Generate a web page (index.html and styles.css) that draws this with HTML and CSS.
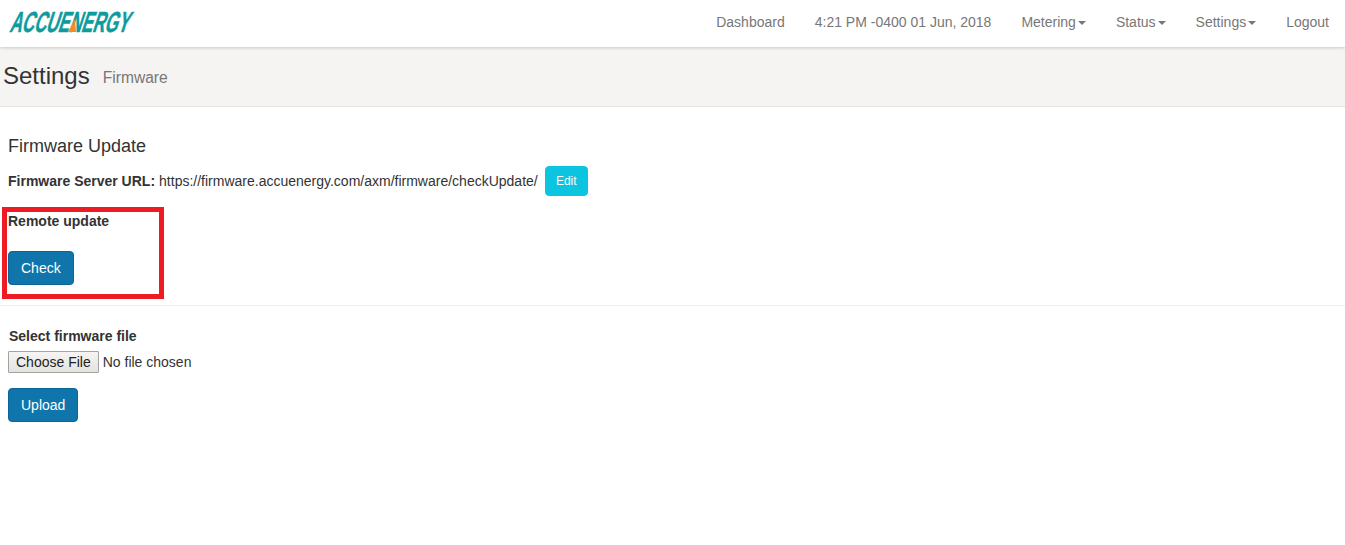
FILE: index.html
```html
<!DOCTYPE html>
<html lang="en">
<head>
<meta charset="utf-8">
<title>Settings - Firmware</title>
<link rel="stylesheet" href="styles.css">
</head>
<body>
<nav class="navbar">
  <a class="brand" href="#">
    <svg class="logo" width="132" height="26" viewBox="0 0 132 26">
      <text class="logo-text" x="0" y="0" textLength="119" lengthAdjust="spacingAndGlyphs" transform="translate(1 22) skewX(-18)">ACCUENERGY</text>
      <polygon class="logo-accent" points="60,22 67,9 68,22"/>
    </svg>
  </a>
  <ul class="nav">
    <li><a href="#">Dashboard</a></li>
    <li><a href="#">4:21 PM -0400 01 Jun, 2018</a></li>
    <li><a href="#">Metering<span class="caret"></span></a></li>
    <li><a href="#">Status<span class="caret"></span></a></li>
    <li><a href="#">Settings<span class="caret"></span></a></li>
    <li><a href="#">Logout</a></li>
  </ul>
</nav>
<header class="page-head">
  <h1>Settings</h1>
  <small>Firmware</small>
</header>
<main class="content">
  <h4>Firmware Update</h4>
  <div class="url-row">
    <b>Firmware Server URL:</b>
    <span class="url">https://firmware.accuenergy.com/axm/firmware/checkUpdate/</span>
    <button class="btn btn-info" type="button">Edit</button>
  </div>
  <section class="remote">
    <div class="annotation"></div>
    <label class="label-remote">Remote update</label>
    <button class="btn btn-primary" type="button">Check</button>
  </section>
  <hr>
  <section class="upload">
    <label class="label-file" for="file">Select firmware file</label>
    <input id="file" class="file" type="file">
    <button class="btn btn-primary btn-upload" type="button">Upload</button>
  </section>
</main>
</body>
</html>
```

FILE: styles.css
```css
* { box-sizing: border-box; }
html, body { margin: 0; padding: 0; }
body {
  font-family: "Liberation Sans", Arial, sans-serif;
  font-size: 14px;
  line-height: 20px;
  color: #333;
  background: #fff;
}
a { text-decoration: none; color: inherit; }

.navbar {
  height: 47px;
  display: flex;
  justify-content: space-between;
  align-items: flex-start;
  background: #fff;
  box-shadow: 0 1px 3px rgba(0, 0, 0, .18);
  position: relative;
}
.brand { display: block; padding: 10px 0 0 8px; }
.logo { display: block; overflow: visible; }
.logo-text {
  font-family: "Liberation Sans", Arial, sans-serif;
  font-weight: 700;
  font-size: 29px;
  fill: #0e9b9d;
  stroke: #0e9b9d;
  stroke-width: .5px;
}
.logo-accent { fill: #f58a26; }

.nav {
  display: flex;
  list-style: none;
  margin: 0;
  padding: 0 1px 0 0;
}
.nav a {
  display: block;
  padding: 12px 15px;
  color: #777;
}
.caret {
  display: inline-block;
  margin-left: 2px;
  vertical-align: middle;
  border-top: 4px solid #777;
  border-left: 4px solid transparent;
  border-right: 4px solid transparent;
}

.page-head {
  height: 60px;
  display: flex;
  align-items: flex-start;
  padding: 14px 3px 0;
  background: #f5f4f2;
  border-bottom: 1px solid #e3e3e3;
}
.page-head h1 {
  margin: 0;
  font-size: 24px;
  font-weight: 400;
  line-height: 30px;
  color: #333;
}
.page-head small {
  margin: 7px 0 0 13px;
  font-size: 15.6px;
  color: #777;
}

.content { padding: 28px 0 0; }
h4 {
  margin: 0 0 0 8px;
  font-size: 18px;
  font-weight: 400;
  line-height: 22px;
}
.url-row {
  display: flex;
  align-items: center;
  margin: 9px 0 0 8px;
  height: 30px;
}
.url { margin-left: 4px; }
.btn {
  display: block;
  font-family: inherit;
  font-size: 14px;
  line-height: 20px;
  color: #fff;
  border: 1px solid transparent;
  border-radius: 4px;
  cursor: pointer;
}
.btn-info {
  margin-left: 7px;
  padding: 5px 10px;
  width: 43px;
  font-size: 12px;
  line-height: 18px;
  background: #0bc4df;
  border-color: #0bc4df;
}
.btn-primary {
  padding: 6px 12px;
  background: #0f75ab;
  border-color: #0b6596;
}

.remote {
  position: relative;
  padding: 0 0 0 8px;
  margin-top: 15px;
}
.annotation {
  position: absolute;
  left: 2px;
  top: -4px;
  width: 162px;
  height: 92px;
  border: 5px solid #ed1c24;
  pointer-events: none;
}
.label-remote { display: block; font-weight: 700; }
.remote .btn { margin-top: 20px; }

hr {
  margin: 20px 0 0;
  border: 0;
  border-top: 1px solid #eee;
}

.upload { padding: 20px 0 0 8px; }
.label-file { display: block; margin-left: 1px; font-weight: 700; }
.file {
  display: block;
  margin-top: 5px;
  font-family: inherit;
  font-size: 14px;
}
.file::file-selector-button {
  padding: 2px 7px;
  font-family: inherit;
  font-size: 14px;
  color: #222;
  border: 1px solid #a3a3a3;
  border-radius: 1px;
  background: linear-gradient(#f6f5f3, #e4e3e0);
}
.btn-upload { margin-top: 15px; }
```
